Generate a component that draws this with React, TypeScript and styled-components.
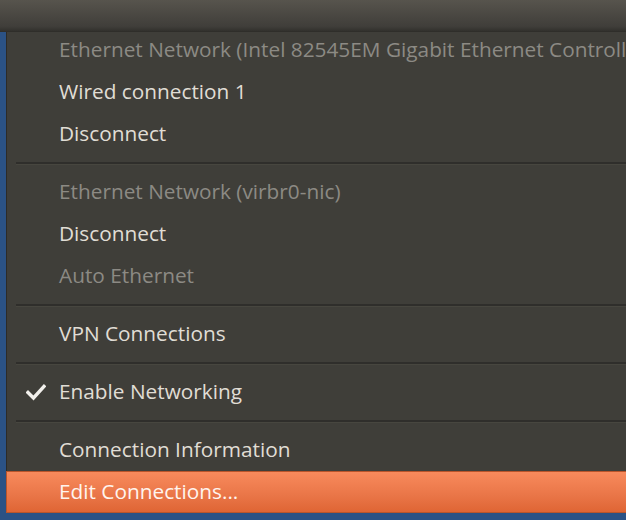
import styled, { createGlobalStyle } from "styled-components"

const GlobalStyle = createGlobalStyle`
    html, body {
        margin: 0;
        padding: 0;
        background: #2b5285;
        overflow: hidden;
    }
    body {
        font-family: "Open Sans", "DejaVu Sans", sans-serif;
        width: 626px;
        height: 520px;
    }
`

type Entry =
    | { kind: "item"; label: string; disabled?: boolean; checked?: boolean; active?: boolean }
    | { kind: "sep" }

const entries: Entry[] = [
    { kind: "item", label: "Ethernet Network (Intel 82545EM Gigabit Ethernet Controller)", disabled: true },
    { kind: "item", label: "Wired connection 1" },
    { kind: "item", label: "Disconnect" },
    { kind: "sep" },
    { kind: "item", label: "Ethernet Network (virbr0-nic)", disabled: true },
    { kind: "item", label: "Disconnect" },
    { kind: "item", label: "Auto Ethernet", disabled: true },
    { kind: "sep" },
    { kind: "item", label: "VPN Connections" },
    { kind: "sep" },
    { kind: "item", label: "Enable Networking", checked: true },
    { kind: "sep" },
    { kind: "item", label: "Connection Information" },
    { kind: "item", label: "Edit Connections...", active: true },
]

const CheckMark = () => (
    <svg width="20" height="18" viewBox="0 0 20 18">
        <path d="M2 9.5 L7.5 15 L18 3.5" fill="none" stroke="#f2f0ec" strokeWidth="3.4" strokeLinecap="square" strokeLinejoin="miter" />
    </svg>
)

export default function App() {
    return (
        <>
            <GlobalStyle />
            <StyledPage>
                <StyledTopBar />
                <StyledMenu>
                    {entries.map((e, i) =>
                        e.kind === "sep" ? (
                            <StyledSeparator key={i} />
                        ) : (
                            <StyledItem key={i} $disabled={e.disabled} $active={e.active} $first={i === 0}>
                                <StyledCheck>{e.checked && <CheckMark />}</StyledCheck>
                                <StyledLabel>{e.label}</StyledLabel>
                            </StyledItem>
                        )
                    )}
                </StyledMenu>
            </StyledPage>
        </>
    )
}

const StyledPage = styled.div`
    width: 626px;
    height: 520px;
    display: flex;
    flex-direction: column;
    overflow: hidden;
`

const StyledTopBar = styled.div`
    height: 31px;
    flex-shrink: 0;
    background: linear-gradient(#57544d, #403e3a 85%, #32312d);
    border-bottom: 1px solid #2f2e2a;
    position: relative;
    z-index: 1;
`

const StyledMenu = styled.div`
    margin-left: 6px;
    width: 700px;
    background: #3f3e39;
    border-left: 1px solid #2c2b28;
    display: flex;
    flex-direction: column;
`

const StyledItem = styled.div<{ $disabled?: boolean; $active?: boolean; $first?: boolean }>`
    height: 42px;
    box-sizing: border-box;
    display: flex;
    align-items: center;
    font-size: 20.8px;
    white-space: nowrap;
    margin-top: ${p => (p.$first ? "-3px" : "0")};
    color: ${p => (p.$disabled ? "#8c8a84" : p.$active ? "#fff4ee" : "#e0ddd5")};
    ${p =>
        p.$active &&
        `
        margin-left: -1px;
        background: linear-gradient(#f88a5c, #e97547 60%, #df6534);
        border: 1px solid #b9552b;
    `}
`

const StyledCheck = styled.div`
    width: 52px;
    flex-shrink: 0;
    display: flex;
    justify-content: flex-start;
    padding-left: 19px;
    box-sizing: border-box;
`

const StyledLabel = styled.span`
    padding-bottom: 3px;
`

const StyledSeparator = styled.div`
    height: 16px;
    margin-left: 9px;
    display: flex;
    flex-direction: column;
    justify-content: center;
    &::before {
        content: "";
        display: block;
        height: 2px;
        background: #2f2e2b;
        border-bottom: 1px solid #47463f;
    }
`
